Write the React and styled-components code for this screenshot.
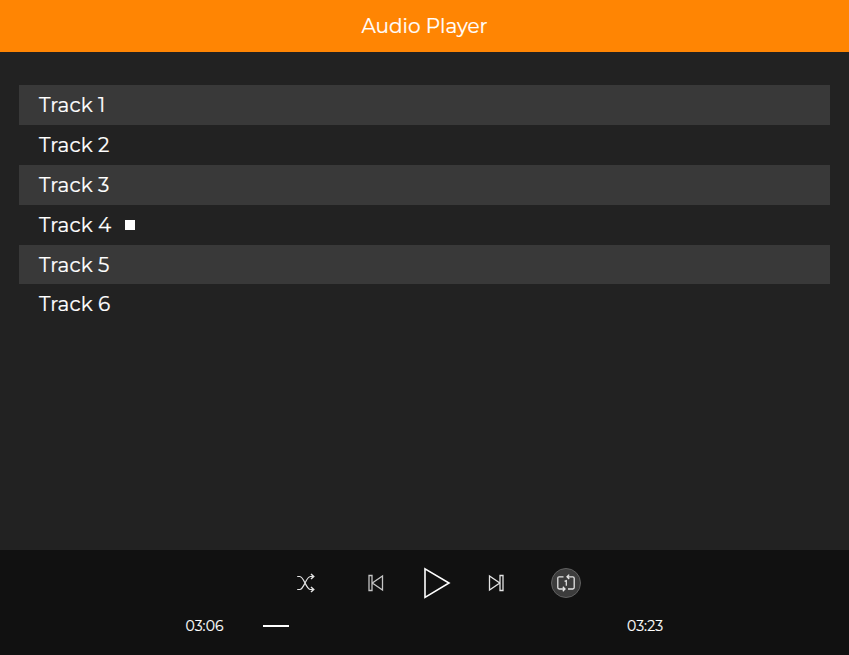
import React from "react";
import styled, { createGlobalStyle } from "styled-components";

const GlobalStyle = createGlobalStyle`
  * { box-sizing: border-box; }
  body { margin: 0; background: #222; color: #fff; font-family: Montserrat, Inter, sans-serif; }
`;

const Player = styled.div`
  display: flex;
  flex-direction: column;
  height: 655px;
  overflow: hidden;
`;

const Header = styled.header`
  display: flex;
  align-items: center;
  justify-content: center;
  flex: none;
  height: 52px;
  background: #ff8503;
  font-size: 20px;
  -webkit-text-stroke: 0.2px #fff;
`;

const TrackList = styled.ul`
  flex: 1;
  margin: 0;
  padding: 33.4px 19px 0;
  list-style: none;
`;

const Track = styled.li`
  display: flex;
  align-items: center;
  height: 39.8px;
  padding-left: 20px;
  font-size: 20px;
  letter-spacing: 0.08px;
  -webkit-text-stroke: 0.2px #fff;
  line-height: 24px;
  background: ${(p) => (p.$shaded ? "#393939" : "transparent")};
`;

const TrackName = styled.span`
  width: 86px;
  padding-top: 0.2px;
`;

const StopMark = styled.span`
  width: 10px;
  height: 10px;
  background: #fff;
`;

const Footer = styled.footer`
  flex: none;
  height: 105px;
  background: #111;
`;

const Controls = styled.div`
  display: flex;
  align-items: center;
  height: 66px;
  padding-left: 291px;
`;

const Slot = styled.div`
  display: flex;
  justify-content: center;
  width: ${(p) => p.$width}px;
`;

const IconButton = styled.button`
  display: flex;
  align-items: center;
  justify-content: center;
  flex: none;
  width: 30px;
  height: 34px;
  padding: 0;
  border: 0;
  background: none;
  color: ${(p) => p.$tone || "#e4e4e4"};
  svg { display: block; overflow: visible; flex: none; }
`;

const RepeatButton = styled(IconButton)`
  height: 30px;
  border: 1px solid #606060;
  border-radius: 50%;
  background: #3c3c3c;
`;

const Bar = styled.div`
  display: flex;
  align-items: center;
  height: 20px;
  padding-left: 185.5px;
`;

const Time = styled.span`
  width: ${(p) => p.$width}px;
  font-size: 14px;
  letter-spacing: 0.05px;
  -webkit-text-stroke: 0.15px #fff;
  line-height: 18px;
  white-space: nowrap;
`;

const Timeline = styled.div`
  width: 364px;
`;

const Elapsed = styled.div`
  width: 26px;
  height: 2px;
  background: #fff;
`;

const Shuffle = () => (
  <svg width="20" height="20" viewBox="0 0 20 20" fill="none" stroke="currentColor" strokeWidth="1.2">
    <path d="M1.2 3.5h2.6C8 3.5 10 16.5 14.4 16.5h3.2M1.2 16.5h2.6C8 16.5 10 3.5 14.4 3.5h3.2" />
    <path d="M15 1l2.7 2.5L15 6M15 14l2.7 2.5L15 19" strokeWidth="1.5" />
  </svg>
);

const Previous = () => (
  <svg width="15" height="16" viewBox="0 0 15 16" fill="none" stroke="currentColor" strokeWidth="1.3">
    <path d="M1 .5h3v15H1zM14.5 1v14L4.3 8z" />
  </svg>
);

const Next = () => (
  <svg width="15" height="16" viewBox="0 0 15 16" fill="none" stroke="currentColor" strokeWidth="1.3">
    <path d="M11 .5h3v15h-3zM.5 1v14L10.8 8z" />
  </svg>
);

const Play = () => (
  <svg width="28" height="32" viewBox="0 0 28 32" fill="none" stroke="currentColor" strokeWidth="1.6">
    <path d="M2 1.8v28.6L26 16z" />
  </svg>
);

const RepeatOne = () => (
  <svg width="18" height="18" viewBox="0 0 18 18" fill="none" stroke="currentColor" strokeWidth="1.3">
    <path d="M6.5 2.8H2.2Q.8 2.8 .8 4.2v9.4Q.8 15 2.2 15H8M11 15h4.8q1.4 0 1.4-1.4V4.2Q17.2 2.8 15.8 2.8H10M12.2.6 10 2.8l2.2 2.2M5.8 12.8 8 15 5.8 17.2" />
    <path d="M7.6 7.4 9.3 6.6v5.2" strokeWidth="1.2" />
  </svg>
);

const tracks = ["Track 1", "Track 2", "Track 3", "Track 4", "Track 5", "Track 6"];
const currentTrack = 3;

export default function App() {
  return (
    <Player>
      <GlobalStyle />
      <Header>Audio Player</Header>
      <TrackList>
        {tracks.map((name, i) => (
          <Track key={name} $shaded={i % 2 === 0}>
            <TrackName>{name}</TrackName>
            {i === currentTrack && <StopMark />}
          </Track>
        ))}
      </TrackList>
      <Footer>
        <Controls>
          <Slot $width={30}><IconButton aria-label="Shuffle"><Shuffle /></IconButton></Slot>
          <Slot $width={109}><IconButton aria-label="Previous" $tone="#c4c4c4"><Previous /></IconButton></Slot>
          <Slot $width={13}><IconButton aria-label="Play" $tone="#fff"><Play /></IconButton></Slot>
          <Slot $width={107}><IconButton aria-label="Next"><Next /></IconButton></Slot>
          <Slot $width={32}><RepeatButton aria-label="Repeat one"><RepeatOne /></RepeatButton></Slot>
        </Controls>
        <Bar>
          <Time $width={77.5}>03:06</Time>
          <Timeline><Elapsed /></Timeline>
          <Time $width={50}>03:23</Time>
        </Bar>
      </Footer>
    </Player>
  );
}
